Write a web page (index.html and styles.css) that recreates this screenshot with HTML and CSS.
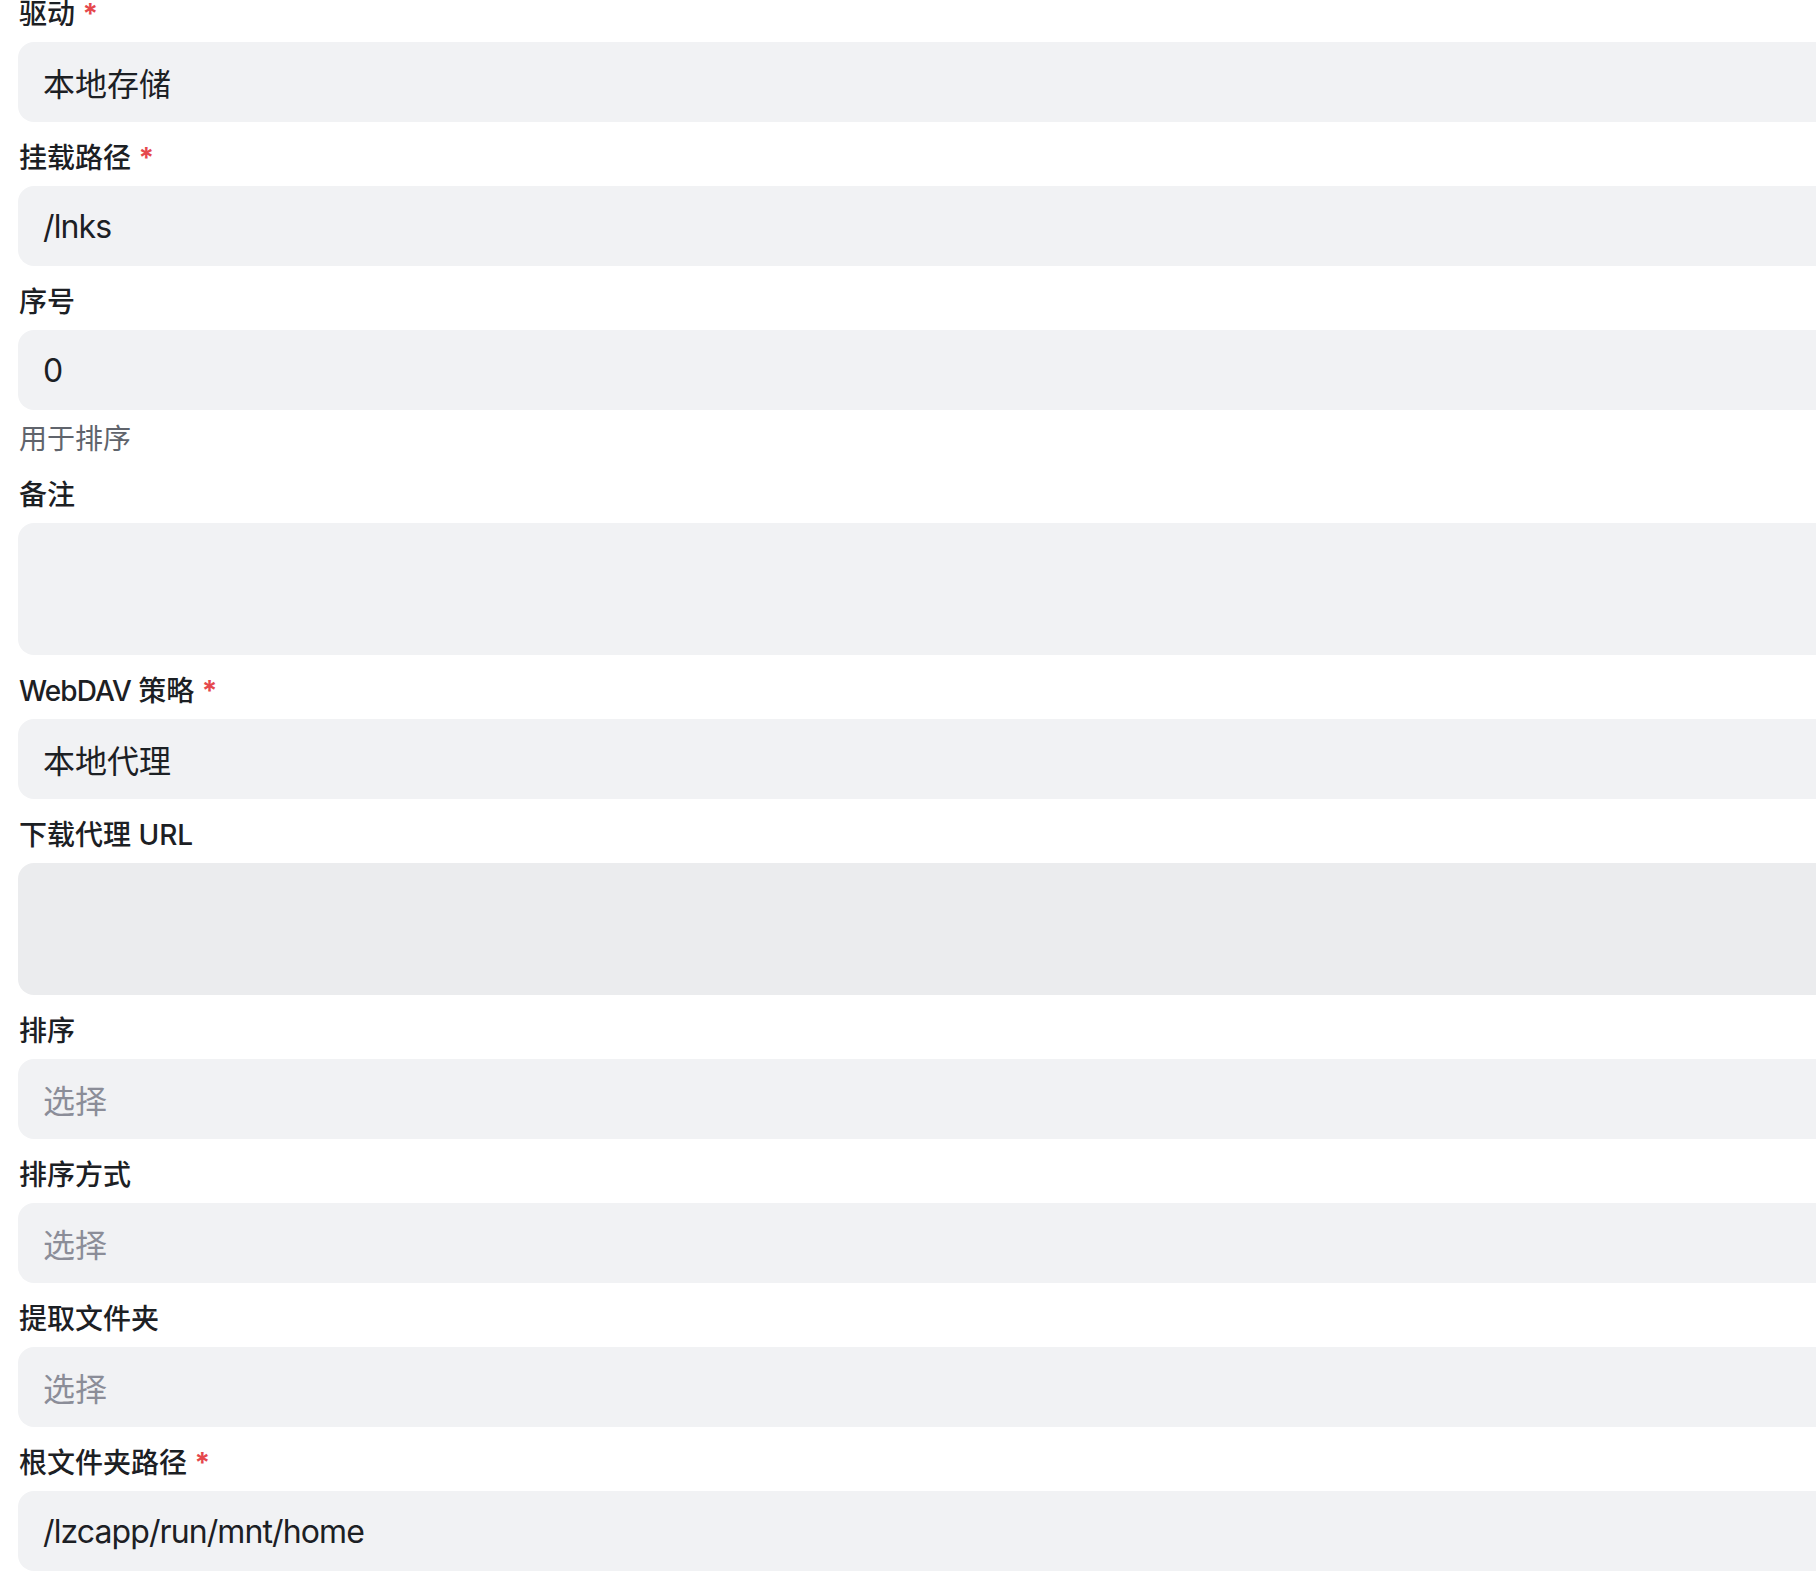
FILE: index.html
```html
<!DOCTYPE html>
<html lang="zh-CN">
<head>
    <meta charset="UTF-8">
    <meta name="viewport" content="width=device-width, initial-scale=1.0">
    <title>编辑存储</title>
    <link rel="stylesheet" href="styles.css">
</head>
<body>
    <form class="storage-form">
        <div class="field">
            <label class="field-label">驱动 <span class="required">*</span></label>
            <div class="input select-input">本地存储</div>
        </div>

        <div class="field">
            <label class="field-label">挂载路径 <span class="required">*</span></label>
            <div class="input"><span class="latin">/lnks</span></div>
        </div>

        <div class="field">
            <label class="field-label">序号</label>
            <div class="input"><span class="latin">0</span></div>
            <p class="field-help">用于排序</p>
        </div>

        <div class="field">
            <label class="field-label">备注</label>
            <div class="input textarea"></div>
        </div>

        <div class="field">
            <label class="field-label"><span class="latin">WebDAV</span> 策略 <span class="required">*</span></label>
            <div class="input select-input">本地代理</div>
        </div>

        <div class="field">
            <label class="field-label">下载代理 URL</label>
            <div class="input textarea disabled"></div>
        </div>

        <div class="field">
            <label class="field-label">排序</label>
            <div class="input placeholder">选择</div>
        </div>

        <div class="field">
            <label class="field-label">排序方式</label>
            <div class="input placeholder">选择</div>
        </div>

        <div class="field">
            <label class="field-label">提取文件夹</label>
            <div class="input placeholder">选择</div>
        </div>

        <div class="field">
            <label class="field-label">根文件夹路径 <span class="required">*</span></label>
            <div class="input"><span class="latin">/lzcapp/run/mnt/home</span></div>
        </div>
    </form>
</body>
</html>
```

FILE: styles.css
```css
html,
body {
    overflow: hidden;
}

body {
    font-family: Inter, "Noto Sans CJK SC", sans-serif;
    margin: 0;
    padding: 0;
    background-color: #fff;
    color: #1c2024;
}

.storage-form {
    width: 2000px;
    margin-top: -6px;
    padding-left: 18px;
}

.field {
    display: flex;
    flex-direction: column;
    margin-bottom: 16px;
}

.field-label {
    font-size: 28px;
    line-height: 40px;
    font-weight: 500;
    margin-bottom: 8px;
    padding-left: 1px;
}

.required {
    color: #e5484d;
    font-weight: 700;
}

.latin {
    letter-spacing: -0.9px;
}

.input {
    height: 80px;
    box-sizing: border-box;
    padding: 0 25px;
    display: flex;
    align-items: center;
    background-color: #f1f2f4;
    border-radius: 16px;
    font-size: 32px;
    color: #1c2024;
}

.input.textarea {
    height: 132px;
}

.input.disabled {
    background-color: #ebecee;
}

.input.placeholder {
    color: #8b8d98;
}

.field-help {
    margin: 9px 0 0;
    padding-left: 1px;
    font-size: 28px;
    line-height: 40px;
    color: #60646c;
}
```
